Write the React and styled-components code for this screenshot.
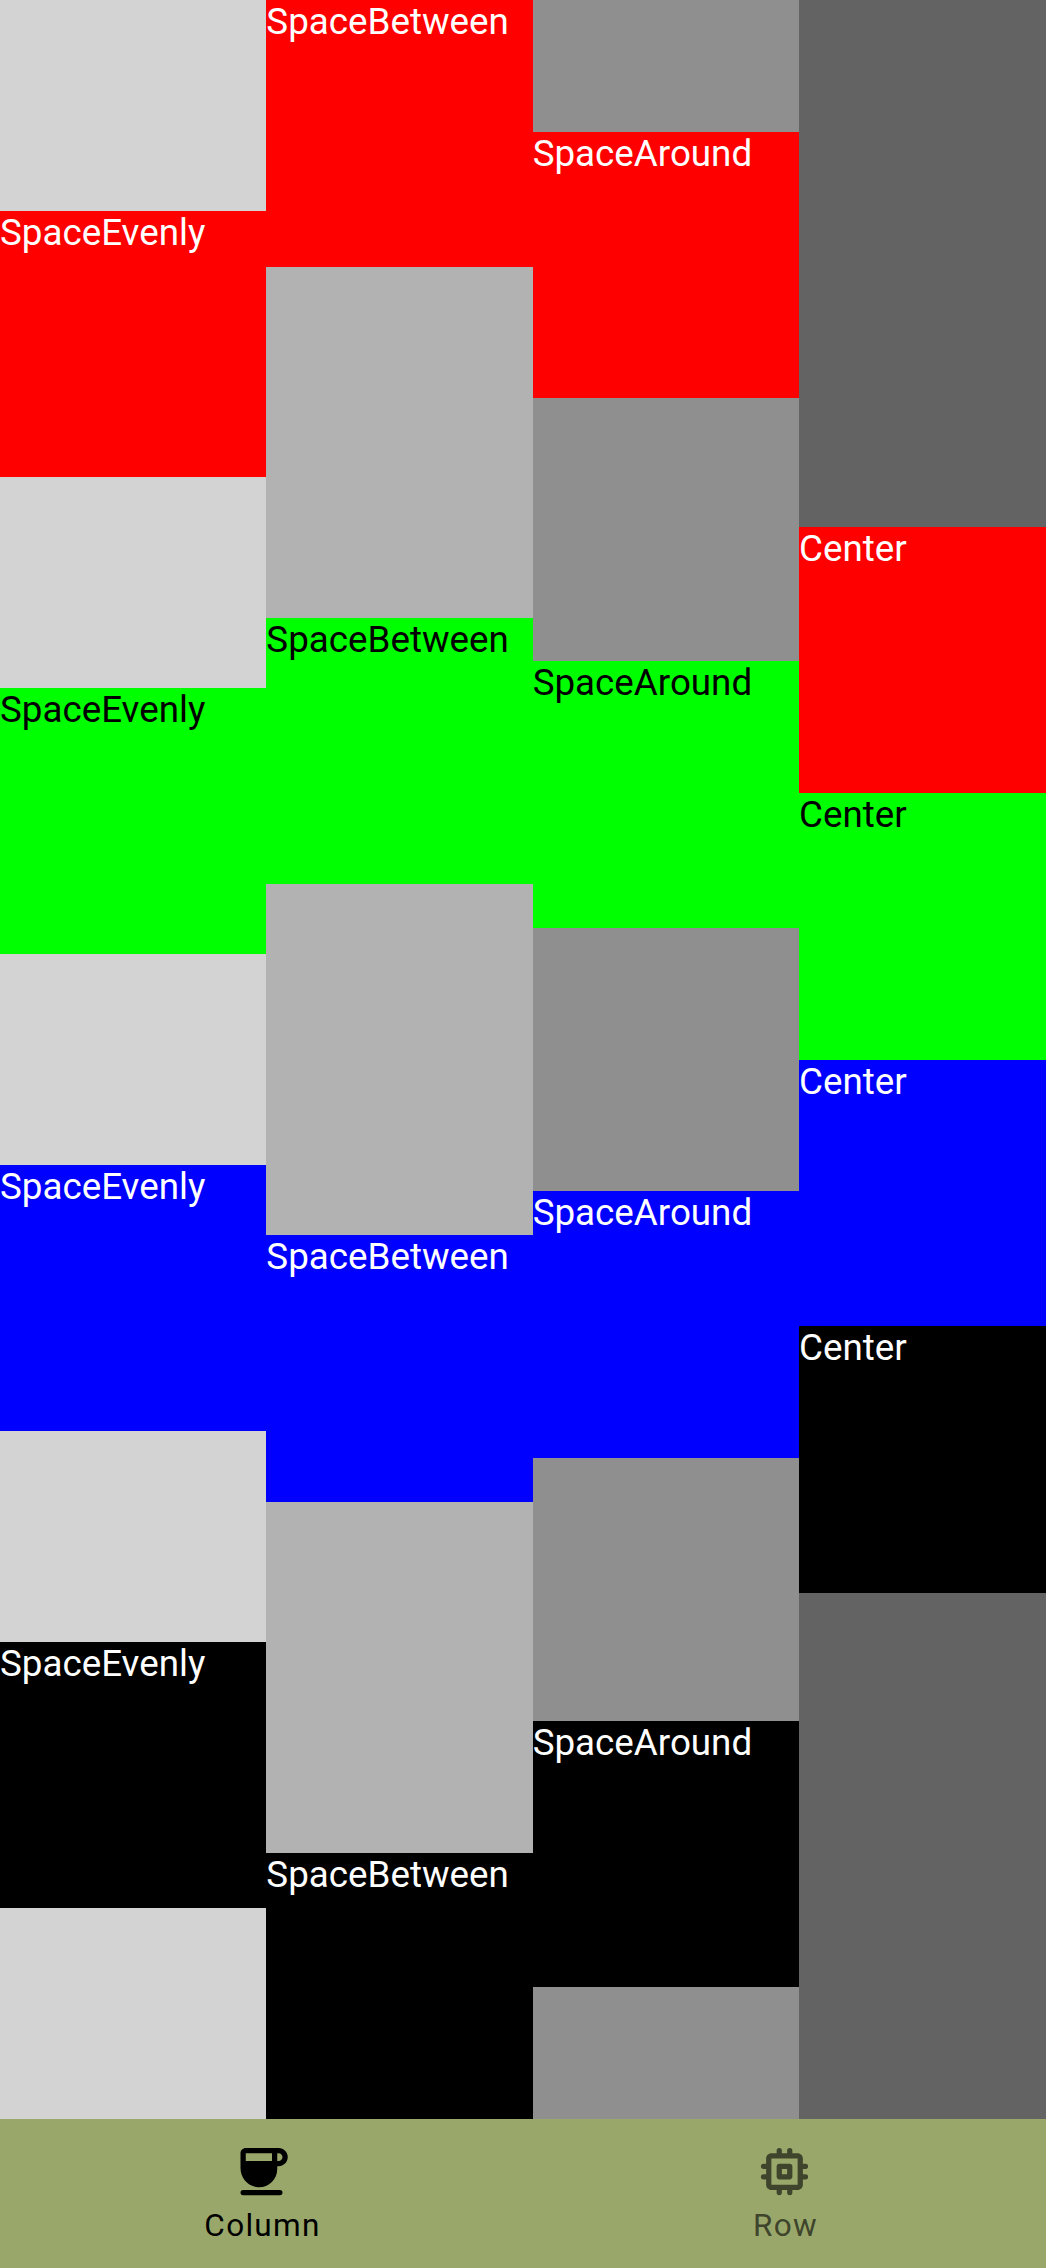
import React from "react";
import styled, { createGlobalStyle } from "styled-components";

const GlobalStyle = createGlobalStyle`
  html, body, #root {
    margin: 0;
    padding: 0;
    height: 100%;
  }
  body {
    font-family: Roboto, "Liberation Sans", sans-serif;
    overflow: hidden;
  }
`;

const COLUMNS = [
  { label: "SpaceEvenly", justify: "space-evenly", bg: "#d3d3d3" },
  { label: "SpaceBetween", justify: "space-between", bg: "#b2b2b2" },
  { label: "SpaceAround", justify: "space-around", bg: "#8f8f8f" },
  { label: "Center", justify: "center", bg: "#636363" },
];

const BOXES = [
  { bg: "#ff0000", fg: "#ffffff" },
  { bg: "#00ff00", fg: "#000000" },
  { bg: "#0000ff", fg: "#ffffff" },
  { bg: "#000000", fg: "#ffffff" },
];

function CoffeeIcon() {
  return (
    <NavIcon viewBox="0 0 24 24" fill="currentColor">
      <path d="M18.5 3H6C4.9 3 4 3.9 4 5v5.71c0 3.83 2.95 7.18 6.78 7.29 3.96.12 7.22-3.06 7.22-7v-1h.5c1.93 0 3.5-1.57 3.5-3.5S20.43 3 18.5 3zM16 5v3H6V5h10zm2.5 3H18V5h.5c.83 0 1.5.67 1.5 1.5S19.33 8 18.5 8zM5 19h14a1 1 0 0 1 0 2H5a1 1 0 0 1 0-2z" />
    </NavIcon>
  );
}

function MemoryIcon() {
  return (
    <NavIcon viewBox="0 0 24 24" fill="currentColor">
      <path
        fillRule="evenodd"
        d="M10 9h4c.55 0 1 .45 1 1v4c0 .55-.45 1-1 1h-4c-.55 0-1-.45-1-1v-4c0-.55.45-1 1-1zm1 2v2h2v-2h-2zM7 5h2V4a1 1 0 0 1 2 0v1h2V4a1 1 0 0 1 2 0v1h2c1.1 0 2 .9 2 2v2h1a1 1 0 0 1 0 2h-1v2h1a1 1 0 0 1 0 2h-1v2c0 1.1-.9 2-2 2h-2v1a1 1 0 0 1-2 0v-1h-2v1a1 1 0 0 1-2 0v-1H7c-1.1 0-2-.9-2-2v-2H4a1 1 0 0 1 0-2h1v-2H4a1 1 0 0 1 0-2h1V7c0-1.1.9-2 2-2zm0 2v10h10V7H7z"
      />
    </NavIcon>
  );
}

export default function App() {
  return (
    <Screen>
      <GlobalStyle />
      <Columns>
        {COLUMNS.map((column) => (
          <Column key={column.label} $bg={column.bg} $justify={column.justify}>
            {BOXES.map((box) => (
              <Box key={box.bg} $bg={box.bg} $fg={box.fg}>
                {column.label}
              </Box>
            ))}
          </Column>
        ))}
      </Columns>
      <BottomBar>
        <NavItem $active>
          <CoffeeIcon />
          <NavLabel>Column</NavLabel>
        </NavItem>
        <NavItem>
          <MemoryIcon />
          <NavLabel>Row</NavLabel>
        </NavItem>
      </BottomBar>
    </Screen>
  );
}

const Screen = styled("div")`
  display: flex;
  flex-direction: column;
  width: 1046px;
  height: 2268px;
  overflow: hidden;
`;

const Columns = styled("div")`
  display: grid;
  grid-template-columns: 266.33px 266.33px 266.33px 1fr;
  height: 2119px;
`;

const Column = styled("div")`
  display: flex;
  flex-direction: column;
  justify-content: ${(props) => props.$justify};
  background: ${(props) => props.$bg};
  min-width: 0;
`;

const Box = styled("div")`
  flex: 0 0 266.5px;
  background: ${(props) => props.$bg};
  color: ${(props) => props.$fg};
  font-size: 36.75px;
  line-height: 44px;
  white-space: nowrap;
`;

const BottomBar = styled("div")`
  display: grid;
  grid-template-columns: 1fr 1fr;
  height: 149px;
  background: #99a86a;
`;

const NavItem = styled("div")`
  display: flex;
  flex-direction: column;
  align-items: center;
  padding-top: 21px;
  color: ${(props) => (props.$active ? "#000000" : "#3f442c")};
`;

const NavIcon = styled("svg")`
  width: 63px;
  height: 63px;
  flex: none;
`;

const NavLabel = styled("span")`
  font-size: 31.5px;
  line-height: 42px;
  letter-spacing: 1.3px;
  margin-top: 2px;
  margin-left: 2px;
`;
